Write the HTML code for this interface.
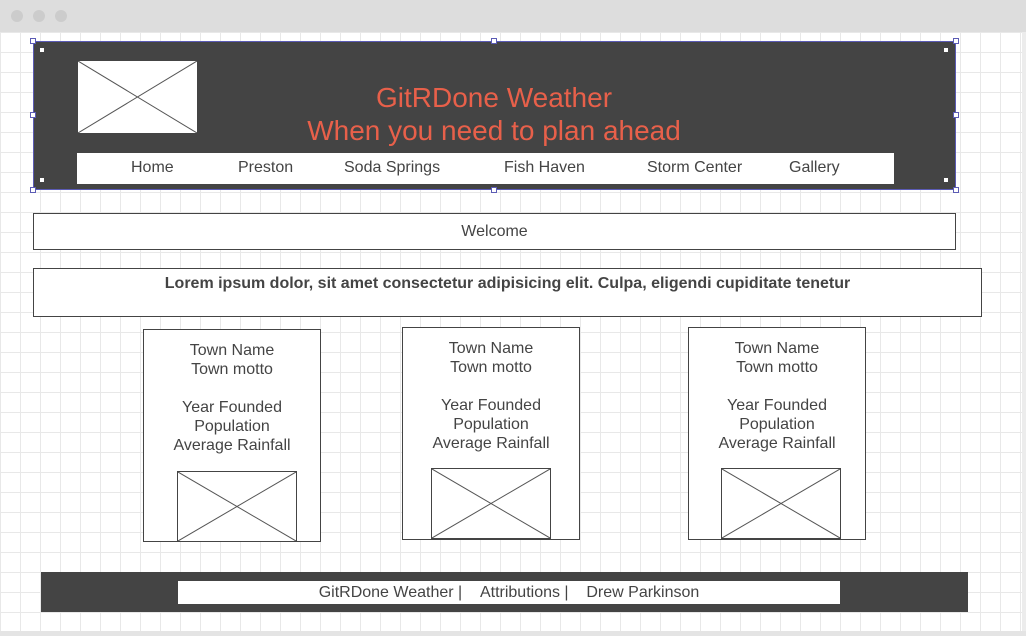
<!DOCTYPE html>
<html><head><style>
*{margin:0;padding:0;box-sizing:border-box}
body{width:1026px;height:636px;overflow:hidden;position:relative;font-family:"Liberation Sans",sans-serif;color:#444;
background-color:#fff;
background-image:linear-gradient(to right,#e8e8e8 1px,transparent 1px),linear-gradient(to bottom,#e8e8e8 1px,transparent 1px);
background-size:20px 20px;background-position:0 12px}
.abs{position:absolute}
.top{left:0;top:0;width:1026px;height:32px;background:#ddd}
.dot{top:10px;width:12px;height:12px;border-radius:50%;background:#ccc}
.bot{left:0;top:631px;width:1026px;height:5px;background:#e4e4e4}
.rs{left:1022px;top:32px;width:4px;height:604px;background:#ececec}
.hdr{left:33px;top:41px;width:923px;height:149px;background:#444;border:1px solid #5b5bb5}
.ph{background:#fff;border:1px solid #444}
.ph svg{position:absolute;left:0;top:0;width:100%;height:100%}
.h{width:100%;text-align:center;color:#e8604a;font-size:28px}
.nav{left:77px;top:153px;width:817px;height:31px;background:#fff;font-size:16px}
.nav span{position:absolute;top:6px}
.box{border:1px solid #444;background:#fff}
.card{border:1px solid #444;background:#fff;text-align:center;font-size:16px;line-height:19px}
.h1{width:6px;height:6px;background:#fff;border:1px solid #5b5bb5}
</style></head><body>
<div class="abs top"></div>
<div class="abs dot" style="left:11px"></div><div class="abs dot" style="left:33px"></div><div class="abs dot" style="left:55px"></div>
<div class="abs rs"></div><div class="abs bot"></div>

<div class="abs hdr"></div>
<div class="abs h1" style="left:30px;top:38px"></div><div class="abs h1" style="left:491px;top:38px"></div><div class="abs h1" style="left:953px;top:38px"></div>
<div class="abs h1" style="left:30px;top:112px"></div><div class="abs h1" style="left:953px;top:112px"></div>
<div class="abs h1" style="left:30px;top:187px"></div><div class="abs h1" style="left:491px;top:187px"></div><div class="abs h1" style="left:953px;top:187px"></div>
<div class="abs" style="left:40px;top:48px;width:4px;height:4px;background:#fff"></div>
<div class="abs" style="left:40px;top:178px;width:4px;height:4px;background:#fff"></div>
<div class="abs" style="left:944px;top:48px;width:4px;height:4px;background:#fff"></div>
<div class="abs" style="left:944px;top:178px;width:4px;height:4px;background:#fff"></div>

<div class="abs ph" style="left:77px;top:60px;width:121px;height:74px"><svg viewBox="0 0 100 100" preserveAspectRatio="none"><path d="M0 0L100 100M100 0L0 100" stroke="#555" stroke-width="1" vector-effect="non-scaling-stroke"/></svg></div>
<div class="abs h" style="left:0;top:82px;width:988px">GitRDone Weather</div>
<div class="abs h" style="left:0;top:115px;width:988px">When you need to plan ahead</div>
<div class="abs nav"><span style="left:54px">Home</span><span style="left:161px">Preston</span><span style="left:267px">Soda Springs</span><span style="left:427px">Fish Haven</span><span style="left:570px">Storm Center</span><span style="left:712px">Gallery</span></div>

<div class="abs box" style="left:33px;top:213px;width:923px;height:37px;text-align:center;font-size:16px;line-height:35px">Welcome</div>
<div class="abs box" style="left:33px;top:268px;width:949px;height:49px;text-align:center;font-size:16px;font-weight:bold;padding-top:6px">Lorem ipsum dolor, sit amet consectetur adipisicing elit. Culpa, eligendi cupiditate tenetur</div>

<div class="abs card" style="left:143px;top:329px;width:178px;height:213px;padding-top:11px">Town Name<br>Town motto<br><br>Year Founded<br>Population<br>Average Rainfall</div>
<div class="abs ph" style="left:177px;top:471px;width:120px;height:71px"><svg viewBox="0 0 100 100" preserveAspectRatio="none"><path d="M0 0L100 100M100 0L0 100" stroke="#555" vector-effect="non-scaling-stroke"/></svg></div>
<div class="abs card" style="left:402px;top:327px;width:178px;height:213px;padding-top:11px">Town Name<br>Town motto<br><br>Year Founded<br>Population<br>Average Rainfall</div>
<div class="abs ph" style="left:431px;top:468px;width:120px;height:71px"><svg viewBox="0 0 100 100" preserveAspectRatio="none"><path d="M0 0L100 100M100 0L0 100" stroke="#555" vector-effect="non-scaling-stroke"/></svg></div>
<div class="abs card" style="left:688px;top:327px;width:178px;height:213px;padding-top:11px">Town Name<br>Town motto<br><br>Year Founded<br>Population<br>Average Rainfall</div>
<div class="abs ph" style="left:721px;top:468px;width:120px;height:71px"><svg viewBox="0 0 100 100" preserveAspectRatio="none"><path d="M0 0L100 100M100 0L0 100" stroke="#555" vector-effect="non-scaling-stroke"/></svg></div>

<div class="abs" style="left:41px;top:572px;width:927px;height:40px;background:#444"></div>
<div class="abs" style="left:178px;top:581px;width:662px;height:23px;background:#fff;text-align:center;font-size:16px;line-height:23px">GitRDone Weather |&nbsp;&nbsp;&nbsp;&nbsp;Attributions |&nbsp;&nbsp;&nbsp;&nbsp;Drew Parkinson</div>
</body></html>
